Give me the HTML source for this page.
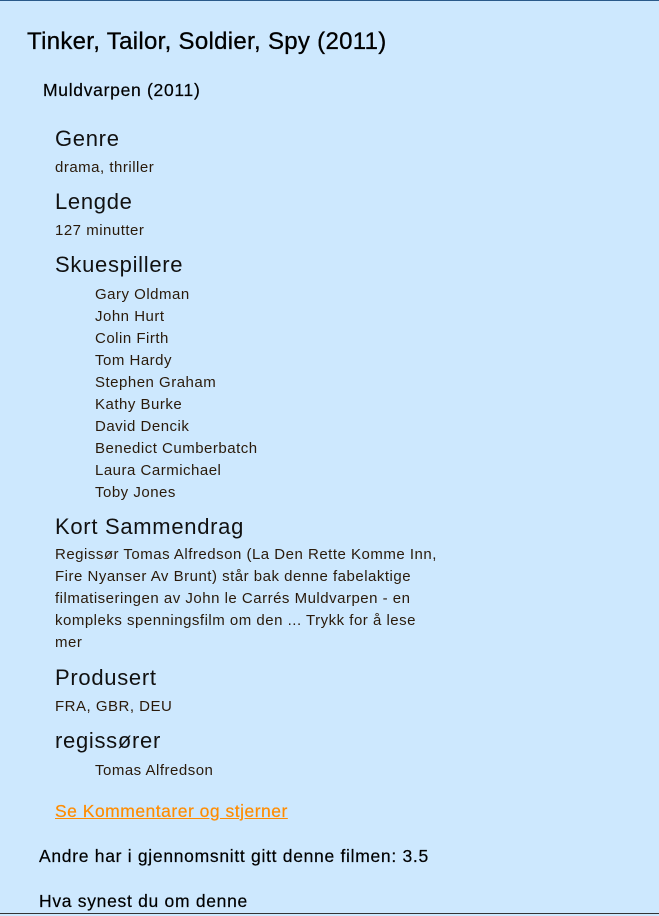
<!DOCTYPE html>
<html><head><meta charset="utf-8"><style>
html,body{margin:0;padding:0}
body{width:659px;height:914px;background:#cde8fe;position:relative;overflow:hidden;font-family:"Liberation Sans",sans-serif;color:#111}
.t{position:absolute;white-space:nowrap;height:30px;line-height:30px}
.h1{font-size:24px;letter-spacing:0.3px;color:#000;-webkit-text-stroke:0.3px #000}
.h3{font-size:17.5px;letter-spacing:0.7px;color:#000;-webkit-text-stroke:0.2px #000}
.h4{font-size:22px;letter-spacing:0.7px;margin-top:2px}
.p{font-size:15px;letter-spacing:0.5px;color:#2a1a0a;margin-top:2px}
a{color:#ff8c00;font-size:17.5px;letter-spacing:0.5px;text-decoration:underline;-webkit-text-stroke:0.2px #ff8c00}
</style></head><body>
<div style="position:absolute;left:0;top:0;width:659px;height:1px;background:#2a5a8a"></div>
<div style="position:absolute;left:0;bottom:0;width:659px;height:1px;background:#333"></div>
<div class="t h1" style="left:27px;top:27px">Tinker, Tailor, Soldier, Spy (2011)</div>
<div class="t h3" style="left:43px;top:75px">Muldvarpen (2011)</div>
<div class="t h4" style="left:55px;top:122px">Genre</div>
<div class="t p" style="left:55px;top:151px">drama, thriller</div>
<div class="t h4" style="left:55px;top:185px">Lengde</div>
<div class="t p" style="left:55px;top:214px">127 minutter</div>
<div class="t h4" style="left:55px;top:248px">Skuespillere</div>
<div class="t p" style="left:95px;top:278px">Gary Oldman</div>
<div class="t p" style="left:95px;top:300px">John Hurt</div>
<div class="t p" style="left:95px;top:322px">Colin Firth</div>
<div class="t p" style="left:95px;top:344px">Tom Hardy</div>
<div class="t p" style="left:95px;top:366px">Stephen Graham</div>
<div class="t p" style="left:95px;top:388px">Kathy Burke</div>
<div class="t p" style="left:95px;top:410px">David Dencik</div>
<div class="t p" style="left:95px;top:432px">Benedict Cumberbatch</div>
<div class="t p" style="left:95px;top:454px">Laura Carmichael</div>
<div class="t p" style="left:95px;top:476px">Toby Jones</div>
<div class="t h4" style="left:55px;top:510px">Kort Sammendrag</div>
<div class="t p" style="left:55px;top:538px">Regissør Tomas Alfredson (La Den Rette Komme Inn,</div>
<div class="t p" style="left:55px;top:560px">Fire Nyanser Av Brunt) står bak denne fabelaktige</div>
<div class="t p" style="left:55px;top:582px">filmatiseringen av John le Carrés Muldvarpen - en</div>
<div class="t p" style="left:55px;top:604px">kompleks spenningsfilm om den ... Trykk for å lese</div>
<div class="t p" style="left:55px;top:626px">mer</div>
<div class="t h4" style="left:55px;top:661px">Produsert</div>
<div class="t p" style="left:55px;top:690px">FRA, GBR, DEU</div>
<div class="t h4" style="left:55px;top:724px">regissører</div>
<div class="t p" style="left:95px;top:754px">Tomas Alfredson</div>
<div class="t" style="left:55px;top:796px"><a>Se Kommentarer og stjerner</a></div>
<div class="t h3" style="left:39px;top:841px">Andre har i gjennomsnitt gitt denne filmen: 3.5</div>
<div class="t h3" style="left:39px;top:886px">Hva synest du om denne</div>
</body></html>
